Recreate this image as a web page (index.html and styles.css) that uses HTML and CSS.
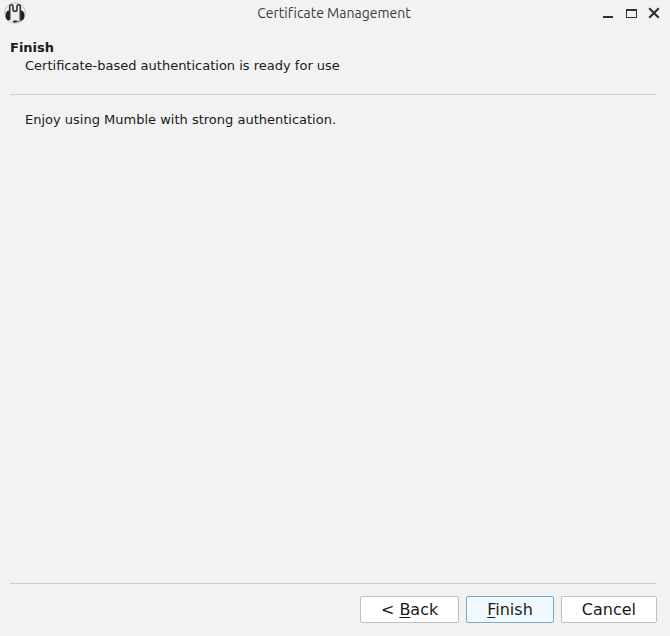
FILE: index.html
```html
<!DOCTYPE html>
<html lang="en">
<head>
<meta charset="utf-8">
<title>Certificate Management</title>
<link rel="stylesheet" href="styles.css">
</head>
<body>
<div class="window">
  <header class="titlebar">
    <svg class="logo" viewBox="0 0 22 22" aria-hidden="true">
      <circle cx="11" cy="11" r="10.3" fill="#eeeeee" stroke="#c4c4c4"/>
      <path d="M5 8.500C3 8.500 1.500 10.500 1.500 13.500s1.500 5 3.500 5zM17 8.500c2 0 3.500 2 3.500 5s-1.500 5-3.500 5z" fill="#222"/>
      <path d="M5.700 18V4.500Q5.700 2.800 7.300 2.800T9 4.500V7.500Q9 9.300 11 9.300T13 7.500V4.500Q13 2.800 14.700 2.800T16.300 4.500V18" fill="none" stroke="#333" stroke-width="1.600"/>
      <path d="M18 18Q16 19.500 11.500 19.500" fill="none" stroke="#555"/>
      <rect x="9" y="18.500" width="4" height="2" rx="1" fill="#222"/>
    </svg>
    <div class="title">Certificate Management</div>
    <div class="controls">
      <button class="control" type="button" aria-label="Minimize"><svg viewBox="0 0 12 12"><path d="M1 9h10v2H1z" fill="#333"/></svg></button>
      <button class="control" type="button" aria-label="Maximize"><svg viewBox="0 0 12 12"><path d="M1 2h11v9H1zM2 4v6h9V4z" fill="#333" fill-rule="evenodd"/></svg></button>
      <button class="control" type="button" aria-label="Close"><svg viewBox="0 0 12 12"><path d="M2 2l8 8M10 2l-8 8" stroke="#333" stroke-width="2.200" stroke-linecap="square"/></svg></button>
    </div>
  </header>
  <div class="heading">
    <h1>Finish</h1>
    <p>Certificate-based authentication is ready for use</p>
  </div>
  <main class="content">
    <p>Enjoy using Mumble with strong authentication.</p>
  </main>
  <footer class="actions">
    <button class="button" type="button">&lt; <u>B</u>ack</button>
    <button class="button primary" type="button"><u>F</u>inish</button>
    <button class="button" type="button">Cancel</button>
  </footer>
</div>
</body>
</html>
```
FILE: styles.css
```css
* { box-sizing: border-box; }
body {
  margin: 0;
  background: #f2f2f2;
  color: #1a1a1a;
  font: 13px/18px "DejaVu Sans", sans-serif;
}
h1, p { margin: 0; font-size: 13px; }
.window {
  display: flex;
  flex-direction: column;
  min-height: 100vh;
}
.titlebar {
  display: grid;
  grid-template-columns: 1fr auto 1fr;
  align-items: center;
  height: 26px;
  padding: 0 10px 0 8px;
}
.logo {
  width: 22px;
  height: 22px;
  margin-left: -4px;
}
.title {
  color: #3c3c3c;
  font: 14px/26px Ubuntu, Roboto, sans-serif;
  font-variant-ligatures: none;
}
.controls {
  display: flex;
  justify-content: flex-end;
  gap: 11px;
}
.control {
  width: 12px;
  height: 12px;
  padding: 0;
  border: 0;
  background: none;
}
.control svg { display: block; }
.heading {
  margin: 13px 14px 0 10px;
  padding-bottom: 19px;
  border-bottom: 1px solid #cecece;
}
.heading p, .content p { padding-left: 15px; }
.content {
  flex: 1;
  margin: 0 14px 0 10px;
  padding-top: 16px;
  border-bottom: 1px solid #cecece;
}
.actions {
  display: flex;
  justify-content: flex-end;
  gap: 7px;
  padding: 12px 13px 13px;
}
.button {
  height: 27px;
  padding: 0 20px;
  border: 1px solid #bfbfbf;
  border-radius: 2px;
  background: #fff;
  color: #1a1a1a;
  font: 16px/25px "DejaVu Sans", sans-serif;
}
.primary {
  border-color: #7ba7cc;
  background: #f0faff;
}
.button u {
  text-decoration-thickness: 1px;
  text-underline-offset: 2px;
  text-decoration-skip-ink: none;
}
```
